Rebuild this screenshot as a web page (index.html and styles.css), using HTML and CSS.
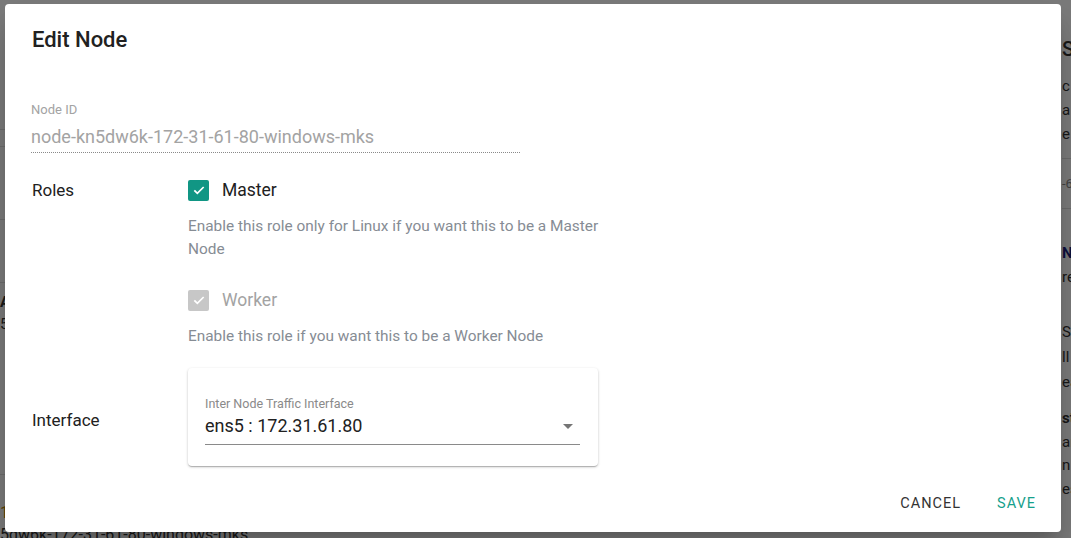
FILE: index.html
```html
<!doctype html>
<html lang="en">
<head>
  <meta charset="utf-8">
  <title>Edit Node</title>
  <link rel="stylesheet" href="styles.css">
</head>
<body>

<div class="page">
  <div class="topbar"></div>
  <div class="page-body">
    <div class="left-col">
      <div class="row r1"></div>
      <div class="row r2"></div>
      <div class="row r3"></div>
      <div class="row r4"></div>
      <div class="row r5"><b>A</b><br>5</div>
      <div class="row r6"><span class="warn">1</span><br>5dw6k-172-31-61-80-windows-mks</div>
    </div>
    <div class="right-col">
      <div class="side-title">S</div>
      <p class="side-text">c<br>a<br>e</p>
      <div class="side-meta">-6</div>
      <div class="side-bold">N</div>
      <p class="side-line">re</p>
      <p class="side-list">S<span class="danger">r</span><br>ll<br>ea</p>
      <p class="side-foot"><b>sta</b><br>an<br>n<br>es</p>
    </div>
  </div>
</div>

<div class="overlay"></div>

<div class="dialog">
  <h2 class="dialog-title">Edit Node</h2>

  <div class="dialog-content">
    <div class="readonly-field">
      <label>Node ID</label>
      <div class="readonly-value">node-kn5dw6k-172-31-61-80-windows-mks</div>
    </div>

    <div class="form-row">
      <div class="row-label">Roles</div>
      <div class="row-body">
        <div class="checkbox">
          <span class="box checked">
            <svg viewBox="0 0 24 24" width="16" height="16"><path d="M5 12.5l4.5 4.5L19 7.5" fill="none" stroke="#fff" stroke-width="2.6"/></svg>
          </span>
          <span class="check-label">Master</span>
        </div>
        <p class="hint">Enable this role only for Linux if you want this to be a Master Node</p>

        <div class="checkbox disabled">
          <span class="box">
            <svg viewBox="0 0 24 24" width="16" height="16"><path d="M5 12.5l4.5 4.5L19 7.5" fill="none" stroke="#fff" stroke-width="2.6"/></svg>
          </span>
          <span class="check-label">Worker</span>
        </div>
        <p class="hint">Enable this role if you want this to be a Worker Node</p>
      </div>
    </div>

    <div class="form-row row-center">
      <div class="row-label">Interface</div>
      <div class="row-body">
        <div class="card">
          <label class="select-label">Inter Node Traffic Interface</label>
          <div class="select">
            <span>ens5 : 172.31.61.80</span>
            <svg class="arrow" viewBox="0 0 10 5" width="10" height="5"><path d="M0 0h10L5 5z" fill="#757575"/></svg>
          </div>
        </div>
      </div>
    </div>
  </div>

  <div class="dialog-actions">
    <button class="btn">Cancel</button>
    <button class="btn btn-primary">Save</button>
  </div>
</div>

</body>
</html>
```

FILE: styles.css
```css
* {
  box-sizing: border-box;
}
body {
  margin: 0;
  width: 1071px;
  height: 538px;
  overflow: hidden;
  font-family: Roboto, "Liberation Sans", sans-serif;
  color: #212121;
  background: #fff;
}

/* page behind the dialog */
.page {
  height: 538px;
  display: flex;
  flex-direction: column;
}
.topbar {
  height: 4px;
  background: #c4c4c4;
}
.page-body {
  flex: 1;
  display: flex;
}
.left-col {
  width: 1059px;
  flex-shrink: 0;
  display: flex;
  flex-direction: column;
  font-size: 15px;
  line-height: 22px;
  color: #333;
}
.left-col .row {
  border-bottom: 1px solid #e0e0e0;
}
.r1 { height: 130px; }
.r2 { height: 17px; }
.r3 { height: 73px; }
.r4 { height: 63px; }
.r5 {
  height: 192px;
  padding-top: 8px;
}
.left-col .r6 {
  border: 0;
  padding-top: 27px;
  font-size: 16px;
}
.warn {
  color: #b8860b;
}
.danger {
  color: #c62828;
}
.right-col {
  flex: 1;
  padding-left: 3px;
  font-size: 15px;
  line-height: 24px;
  color: #333;
}
.right-col p {
  margin: 0;
}
.side-title {
  font-size: 20px;
  font-weight: 500;
  margin-top: 37px;
}
.side-text {
  margin-top: 13px !important;
}
.side-meta {
  font-size: 13px;
  color: #888;
  border-top: 1px solid #ddd;
  border-bottom: 1px solid #ddd;
  padding: 13px 0 12px;
  margin-top: 12px;
}
.side-bold {
  margin-top: 32px;
  font-weight: 700;
  color: #1a237e;
}
.side-list {
  margin-top: 31px !important;
  line-height: 25px;
}
.side-foot {
  margin-top: 12px !important;
  line-height: 23.5px;
}

.overlay {
  position: absolute;
  inset: 0;
  background: rgba(0, 0, 0, 0.52);
}

/* dialog */
.dialog {
  position: absolute;
  left: 5px;
  top: 4px;
  width: 1056px;
  height: 528px;
  background: #fff;
  border-radius: 4px;
  box-shadow: 0 11px 15px -7px rgba(0,0,0,.2), 0 24px 38px 3px rgba(0,0,0,.14);
  display: flex;
  flex-direction: column;
  padding: 0 26px 0 27px;
}
.dialog-title {
  margin: 22px 0 0;
  font-size: 22px;
  font-weight: 500;
  line-height: 28px;
  color: #212121;
}
.dialog-content {
  flex: 1;
  padding-top: 48px;
}
.readonly-field {
  width: 489px;
  margin-left: -1px;
  border-bottom: 1px dotted #8a8a8a;
  padding-bottom: 2px;
}
.readonly-field label {
  display: block;
  font-size: 13px;
  line-height: 16px;
  color: #a3a3a3;
}
.readonly-value {
  font-size: 18px;
  line-height: 26px;
  color: #a3a3a3;
  margin-top: 6px;
}

.form-row {
  display: flex;
  margin-top: 24px;
}
.row-center {
  align-items: center;
  margin-top: 20px;
}
.row-center .row-label {
  margin-top: 6px;
}
.row-label {
  width: 156px;
  font-size: 17px;
  line-height: 26px;
  color: #212121;
}
.row-body {
  flex: 1;
}
.checkbox {
  display: flex;
  align-items: center;
  height: 26px;
}
.box {
  width: 21px;
  height: 21px;
  border-radius: 2px;
  background: #c7c7c7;
  display: flex;
  align-items: center;
  justify-content: center;
}
.box.checked {
  background: #119684;
}
.check-label {
  margin-left: 13px;
  font-size: 17.5px;
  color: #212121;
}
.disabled .check-label {
  color: #a3a3a3;
}
.hint {
  margin: 12px 0 26px;
  width: 440px;
  font-size: 15.4px;
  line-height: 23px;
  color: #868c94;
}
.hint:last-child {
  margin-bottom: 0;
}

.card {
  width: 410px;
  height: 98px;
  border-radius: 4px;
  box-shadow: 0 1px 3px rgba(0,0,0,.2), 0 1px 1px rgba(0,0,0,.12), 0 2px 1px -1px rgba(0,0,0,.1);
  padding: 28px 18px 0 17px;
}
.select-label {
  display: block;
  font-size: 12.5px;
  line-height: 15px;
  color: #8a8a8a;
}
.select {
  display: flex;
  align-items: center;
  justify-content: space-between;
  height: 34px;
  padding-bottom: 4px;
  border-bottom: 1px solid #8a8a8a;
  font-size: 18px;
  color: #212121;
  padding-right: 7px;
}
.arrow {
  margin-top: 2px;
}

.dialog-actions {
  display: flex;
  justify-content: flex-end;
  gap: 16px;
  margin-right: -11px;
  padding: 0 0 10px;
}
.btn {
  border: 0;
  background: none;
  font-family: inherit;
  font-size: 14.5px;
  letter-spacing: 1px;
  text-transform: uppercase;
  color: #333;
  padding: 8px 10px;
  line-height: 20px;
}
.btn-primary {
  color: #16a08c;
}
```
